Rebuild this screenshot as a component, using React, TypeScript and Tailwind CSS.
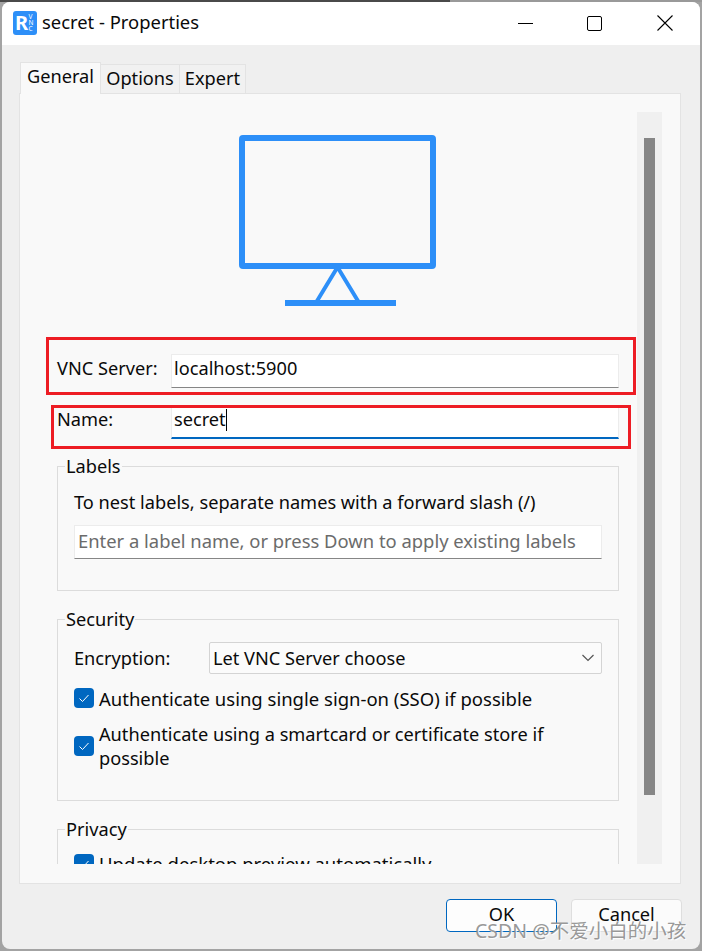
import React from "react";

const font = "font-['Noto_Sans','Open_Sans',sans-serif]";

function Check() {
  return (
    <svg width="12" height="12" viewBox="0 0 12 12" fill="none" stroke="#ffffff" strokeWidth="1">
      <path d="M1.5 6.5 L4.5 9.5 L10.5 3" />
    </svg>
  );
}

function CheckBox() {
  return (
    <span className="flex h-5 w-5 shrink-0 items-center justify-center rounded-[4px] bg-[#0067c0]">
      <Check />
    </span>
  );
}

function Logo() {
  return (
    <svg width="24" height="24" viewBox="0 0 24 24">
      <rect width="24" height="24" rx="3" fill="#2d8ff8" />
      <text x="2" y="19" fontSize="20" fontWeight="700" fill="#ffffff" fontFamily="Noto Sans, sans-serif">R</text>
      <text x="15.5" y="8" fontSize="6.5" fill="#ffffff" fontFamily="Noto Sans, sans-serif">V</text>
      <text x="15.5" y="14" fontSize="6.5" fill="#ffffff" fontFamily="Noto Sans, sans-serif">N</text>
      <text x="15.5" y="20" fontSize="6.5" fill="#ffffff" fontFamily="Noto Sans, sans-serif">C</text>
    </svg>
  );
}

function Monitor() {
  return (
    <svg width="197" height="171" viewBox="0 0 197 171" fill="none" stroke="#2d8ff8">
      <rect x="3" y="3" width="191" height="128" rx="1" strokeWidth="6" />
      <path d="M98 133 L78 166 M99 133 L119 166" strokeWidth="4" />
      <path d="M46 168 H157" strokeWidth="6" />
    </svg>
  );
}

function Group({ title, className, children }: { title: string; className: string; children: React.ReactNode }) {
  return (
    <fieldset className={`border border-[#dcdcdc] px-4 ${className}`}>
      <legend className="ml-[-9px] h-6 px-px leading-6">{title}</legend>
      {children}
    </fieldset>
  );
}

export default function App() {
  return (
    <div className={`relative h-[951px] w-[702px] overflow-hidden bg-[#a3a3a3] text-[18.2px] text-[#0a0a0a] ${font}`}>
      <div className="flex h-[2px]">
        <div className="w-[450px] bg-[#4a4a4a]" />
        <div className="flex-1 bg-[#999999]" />
      </div>
      <div className="ml-[2px] flex h-[947px] w-[698px] flex-col overflow-hidden rounded-[8px] bg-[#efefef]">
        <div className="flex h-[43px] shrink-0 items-center bg-white pb-[1px] pl-[11px]">
          <Logo />
          <span className="mb-[2px] ml-[5px] text-[18.4px]">secret - Properties</span>
          <div className="ml-auto flex h-full items-center">
            <span className="flex h-full w-[70px] items-center justify-center">
              <span className="h-px w-[15px] bg-black" />
            </span>
            <span className="flex h-full w-[70px] items-center justify-center pr-[1px]">
              <span className="h-[15px] w-[15px] rounded-[2px] border border-black" />
            </span>
            <span className="flex h-full w-[70px] items-center justify-center pr-[1px]">
              <svg width="16" height="16" viewBox="0 0 16 16" stroke="#000000" strokeWidth="1.1">
                <path d="M0.5 0.5 L15.5 15.5 M15.5 0.5 L0.5 15.5" />
              </svg>
            </span>
          </div>
        </div>

        <div className="mt-[17px] flex h-[31px] items-end pl-[18px]">
          <div className="z-10 -mb-px flex h-[32px] w-[81px] items-center justify-center border border-b-0 border-[#e3e3e3] bg-[#f9f9f9] pb-[3px]">General</div>
          <div className="flex h-[29px] w-[79px] items-center justify-center border border-l-0 border-b-0 border-[#e3e3e3] bg-[#f1f1f1]">Options</div>
          <div className="flex h-[29px] w-[66px] items-center justify-center border border-l-0 border-b-0 border-[#e3e3e3] bg-[#f1f1f1]">Expert</div>
        </div>

        <div className="ml-[17px] flex h-[791px] w-[662px] shrink-0 border border-[#e3e3e3] bg-[#f9f9f9] pt-[18px]">
          <div className="h-[752px] w-[617px] shrink-0 overflow-hidden pl-[37px] pr-[18px] pt-[23px]">
            <div className="flex justify-center pr-[2px]">
              <Monitor />
            </div>
            <div className="mt-[48px] flex h-[34px] items-center">
              <span className="mb-[4px] w-[114px] shrink-0">VNC Server:</span>
              <div className="flex h-[34px] flex-1 items-center border border-[#ececec] border-b-[#868686] bg-white pb-[4px] pl-[2px]">localhost:5900</div>
            </div>
            <div className="mt-[17px] flex h-[34px] items-center">
              <span className="mb-[5px] w-[114px] shrink-0">Name:</span>
              <div className="flex h-[34px] flex-1 items-center border border-[#ececec] border-b-2 border-b-[#0067c0] bg-white pb-[4px] pl-[2px]">
                secret<span className="h-[22px] w-px bg-black" />
              </div>
            </div>

            <Group title="Labels" className="mt-[15px] pb-[31px] pt-[12px]">
              <div className="h-6 leading-6">To nest labels, separate names with a forward slash (/)</div>
              <div className="mt-[11px] flex h-[34px] items-center border border-[#ececec] border-b-[#868686] bg-white pb-[3px] pl-[3px] text-[18.4px] text-[#6b6b6b]">
                Enter a label name, or press Down to apply existing labels
              </div>
            </Group>

            <Group title="Security" className="mt-[16px] pb-[30px] pt-[11px]">
              <div className="flex h-[32px] items-center">
                <span className="mt-[1px] w-[135px] shrink-0">Encryption:</span>
                <div className="flex h-[32px] flex-1 items-center justify-between rounded-[2px] border border-[#d4d4d4] bg-[#fbfbfb] pl-[3px] pr-[6px]">
                  <span className="mt-[1px]">Let VNC Server choose</span>
                  <svg width="14" height="8" viewBox="0 0 14 8" fill="none" stroke="#555555" strokeWidth="1.2">
                    <path d="M1.5 1 L7 6.5 L12.5 1" />
                  </svg>
                </div>
              </div>
              <div className="mt-[12px] flex h-6 items-center gap-[5px]">
                <CheckBox />
                <span className="mt-[1px] text-[18.5px]">Authenticate using single sign-on (SSO) if possible</span>
              </div>
              <div className="mt-[12px] flex items-center gap-[5px]">
                <CheckBox />
                <span className="leading-6">
                  Authenticate using a smartcard or certificate store if
                  <br />
                  possible
                </span>
              </div>
            </Group>

            <Group title="Privacy" className="mt-[16px] pb-[30px] pt-[11px]">
              <div className="flex h-6 items-center gap-[5px]">
                <CheckBox />
                <span className="text-[18.5px]">Update desktop preview automatically</span>
              </div>
            </Group>
          </div>
          <div className="h-[752px] w-[25px] shrink-0 bg-[#f0f0f0] pl-[7px] pt-[26px]">
            <div className="h-[657px] w-[11px] bg-[#868686]" />
          </div>
        </div>

        <div className="mt-[15px] flex justify-end gap-[14px] pr-[18px]">
          <div className="flex h-[33px] w-[111px] items-center justify-center rounded-[4px] border border-[#0067c0] bg-[#fdfdfd] pb-[2px]">OK</div>
          <div className="flex h-[33px] w-[111px] items-center justify-center rounded-[4px] border border-[#dedede] bg-[#fbfbfb] pb-[2px]">Cancel</div>
        </div>
      </div>

      <div className="absolute left-[46px] top-[337px] h-[58px] w-[590px] border-[3px] border-[#ed1c24]" />
      <div className="absolute left-[51px] top-[405px] h-[44px] w-[580px] border-[3px] border-[#ed1c24]" />
      <div className="absolute left-[475px] top-[919px] font-['Noto_Sans','Noto_Sans_CJK_SC',sans-serif] text-[19.5px] leading-6 text-[#8c8c8c]/90 [text-shadow:1px_1px_1px_#ffffff]">
        CSDN @不爱小白的小孩
      </div>
    </div>
  );
}
